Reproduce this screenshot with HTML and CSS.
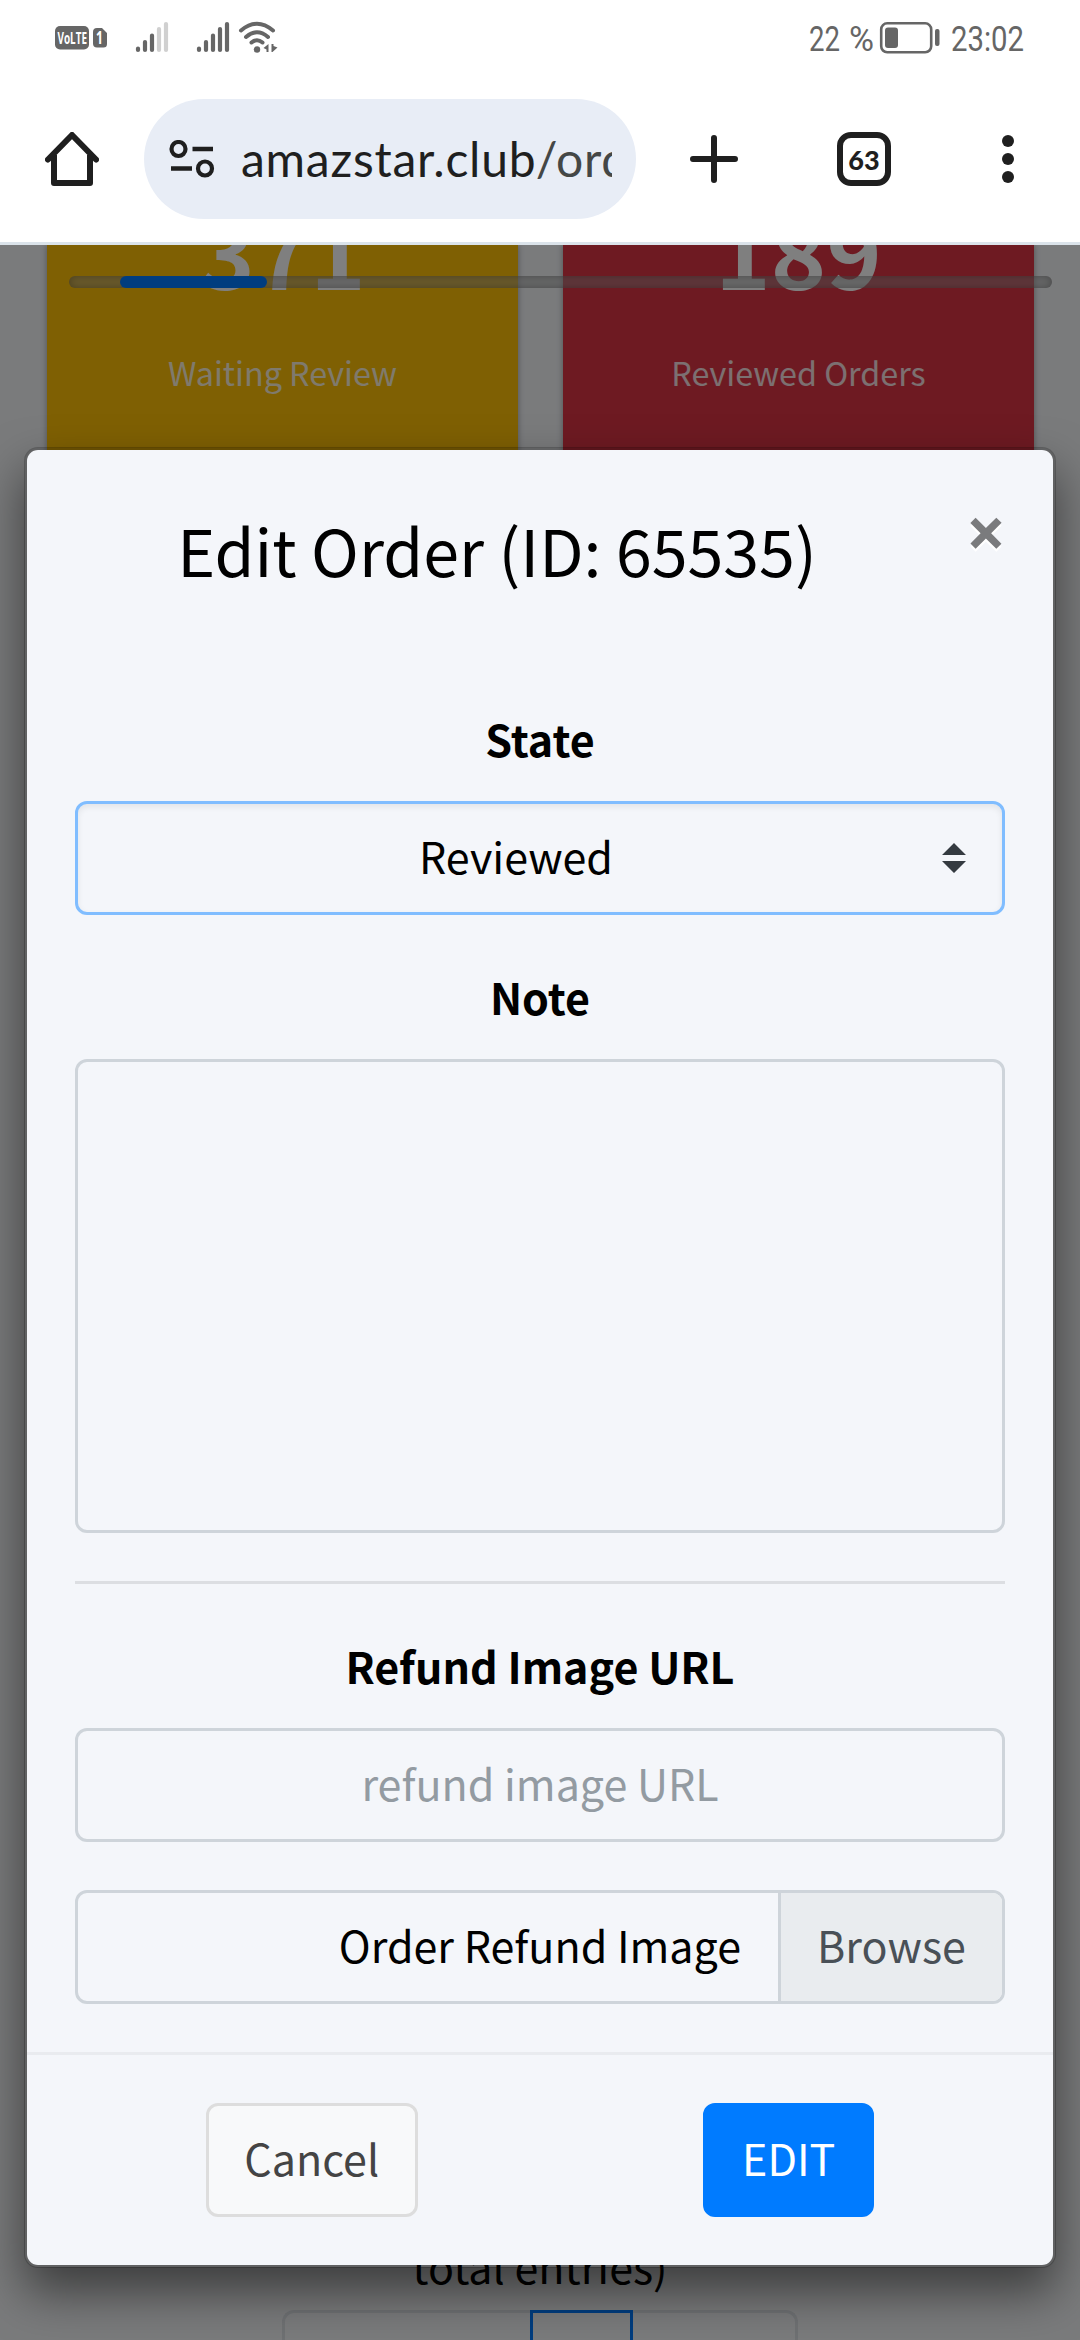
FILE: index.html
```html
<!DOCTYPE html>
<html lang="en">
<head>
<meta charset="utf-8">
<title>Orders</title>
<link rel="stylesheet" href="styles.css">
</head>
<body>
<header class="chrome">
  <div class="status">
    <svg width="290" height="76" viewBox="0 0 290 76">
      <g fill="#666">
        <rect x="55" y="26" width="34" height="23.5" rx="5"/>
        <path d="M97 28h5l5 5v11a3.500 3.500 0 0 1-3.500 3.500H97a4 4 0 0 1-4-4V32a4 4 0 0 1 4-4z"/>
      </g>
      <text x="57.500" y="43.500" class="badge" textLength="29.500" lengthAdjust="spacingAndGlyphs">VoLTE</text>
      <text x="96" y="44" class="badge badge-sim" textLength="7" lengthAdjust="spacingAndGlyphs">1</text>
      <g stroke="#666" stroke-width="4.200" stroke-linecap="round">
        <path d="M138 48.500v1.500M145 42v8M152 35.500v14.500"/>
        <path d="M159 29v21M166 24v26" stroke="#d0d0d0"/>
        <path d="M199 48.500v1.500M206 42v8M213 35.500v14.500M220 29v21M227 24v26"/>
      </g>
      <g fill="none" stroke="#666" stroke-width="4" stroke-linecap="round">
        <path d="M241 30.500q16-13.500 32 0M246 37q11-9.500 22 0M251.500 42.500q5.500-4.500 11 0"/>
      </g>
      <circle cx="257" cy="49.500" r="3.200" fill="#666"/>
      <path d="M268.500 44v8h-2v-2.500l-3-1.500zM271.500 44h2v2l4 1.500-5 4.500h-1z" fill="#666"/>
    </svg>
    <svg width="290" height="76" viewBox="790 0 290 76">
      <text x="809" y="51" class="clock" textLength="31" lengthAdjust="spacingAndGlyphs">22</text>
      <text x="849" y="51" class="clock" textLength="25" lengthAdjust="spacingAndGlyphs">%</text>
      <rect x="881.200" y="23.300" width="50" height="29" rx="6" fill="none" stroke="#666" stroke-width="2.600"/>
      <rect x="885" y="27.500" width="13" height="20.500" rx="3" fill="#666"/>
      <rect x="935" y="29" width="4.500" height="17" rx="2" fill="#666"/>
      <text x="951" y="51" class="clock" textLength="73" lengthAdjust="spacingAndGlyphs">23:02</text>
    </svg>
  </div>
  <div class="toolbar">
    <svg class="home" width="54" height="54" viewBox="0 0 54 54" fill="none" stroke="#1f1f1f" stroke-width="6" stroke-linecap="round" stroke-linejoin="round">
      <path d="M3 27.500L27 3l24 24.500"/><path d="M9 23v28h36V23" stroke-linecap="butt"/>
    </svg>
    <div class="address">
      <svg width="46" height="38" viewBox="0 0 46 38" fill="none" stroke="#1f1f1f">
        <circle cx="9.500" cy="9" r="7" stroke-width="4.200"/><circle cx="36" cy="28.500" r="7" stroke-width="4.200"/>
        <path d="M23.500 9H44M2 28.500h21" stroke-width="4.600"/>
      </svg>
      <div class="url">amazstar.club<span>/ord</span></div>
    </div>
    <svg class="plus" width="48" height="48" viewBox="0 0 48 48" stroke="#1f1f1f" stroke-width="6" stroke-linecap="round"><path d="M24 3v42M3 24h42"/></svg>
    <div class="tabs">63</div>
    <svg class="menu" width="12" height="48" viewBox="0 0 12 48" fill="#1f1f1f"><circle cx="6" cy="6" r="6"/><circle cx="6" cy="24" r="6"/><circle cx="6" cy="42" r="6"/></svg>
  </div>
</header>
<main class="page">
  <section class="cards">
    <div class="card card-warning"><strong>371</strong><span>Waiting Review</span></div>
    <div class="card card-danger"><strong>189</strong><span>Reviewed Orders</span></div>
  </section>
  <footer class="listing">
    <p>total entries)</p>
    <div class="pagination"><i class="first"></i><i class="current"></i><i class="last"></i></div>
  </footer>
  <div class="track"><div class="thumb"></div></div>
  <div class="backdrop"></div>
  <div class="modal">
    <div class="modal-header"><h1>Edit Order (ID: 65535)</h1><span class="close">×</span></div>
    <div class="modal-body">
      <div class="label">State</div>
      <div class="control select"><span>Reviewed</span>
        <svg width="24" height="30" viewBox="0 0 24 30" fill="#343a40"><path d="M12 0l12 12H0zM0 18h24L12 30z"/></svg>
      </div>
      <div class="label label-next">Note</div>
      <div class="control note"></div>
      <div class="rule"></div>
      <div class="label">Refund Image URL</div>
      <div class="control placeholder"><span>refund image URL</span></div>
      <div class="control file"><span>Order Refund Image</span><span class="browse">Browse</span></div>
    </div>
    <div class="modal-footer"><div class="btn cancel">Cancel</div><div class="btn edit">EDIT</div></div>
  </div>
</main>
</body>
</html>
```
FILE: styles.css
```css
* { box-sizing: border-box; }
body {
  margin: 0;
  width: 1080px;
  height: 2340px;
  overflow: hidden;
  display: flex;
  flex-direction: column;
  background: #fff;
  color: #000;
  font: 43px/72px "Noto Sans CJK JP", "Noto Sans", sans-serif;
}
svg { display: block; flex: none; }

/* Phone status bar and browser toolbar */
.chrome { flex: none; height: 245px; border-bottom: 3px solid #dbe3ea; }
.status { height: 76px; display: flex; justify-content: space-between; }
.badge { font: 700 16px "Open Sans", sans-serif; fill: #fff; }
.badge-sim { font-size: 17px; }
.clock { font: 400 35px Roboto, sans-serif; fill: #666; }
.toolbar { height: 166px; display: flex; align-items: center; padding-left: 45px; }
.address {
  flex: none;
  width: 492px;
  height: 120px;
  margin-left: 45px;
  padding: 0 24px 0 25px;
  border-radius: 60px;
  background: #e8edf6;
  display: flex;
  align-items: center;
  gap: 26px;
}
.url {
  flex: 1;
  overflow: hidden;
  white-space: nowrap;
  font: 48px/72px Lato, sans-serif;
  letter-spacing: .75px;
  color: #1f1f1f;
}
.url span { color: #444746; }
.plus { margin-left: 54px; }
.tabs {
  width: 54px;
  height: 54px;
  margin-left: 99px;
  border: 6px solid #1f1f1f;
  border-radius: 14px;
  font: 900 27px/43px Lato, sans-serif;
  text-align: center;
  color: #1f1f1f;
}
.menu { margin-left: 111px; }

/* Dimmed page */
.page { position: relative; flex: 1; overflow: hidden; background: #f4f6f9; display: flex; flex-direction: column; justify-content: space-between; }
.cards { display: flex; gap: 45px; padding: 0 46px 0 47px; }
.card {
  flex: 1;
  height: 250px;
  display: flex;
  flex-direction: column;
  align-items: center;
  box-shadow: 0 0 6px rgba(0, 0, 0, .35);
  color: #fff;
}
.card-warning { background: #ffc107; }
.card-danger { background: #dc3545; }
.card strong { font-size: 94px; line-height: 100px; margin-top: -46px; }
.card span { font-size: 32.3px; line-height: 54px; margin-top: 46px; opacity: .85; }
.listing { height: 90px; display: flex; flex-direction: column; align-items: center; }
.listing p { margin: -21px 0 9px; line-height: 72px; }
.pagination { width: 516px; height: 40px; display: flex; }
.pagination i { border: 0 solid #dee2e6; border-top-width: 3px; flex: none; }
.pagination .first { width: 248px; border-left-width: 3px; border-top-left-radius: 12px; }
.pagination .current { width: 103px; border: 3px solid #007bff; border-bottom: 0; }
.pagination .last { width: 165px; border-right-width: 3px; border-top-right-radius: 12px; }
.track {
  position: absolute;
  left: 69px;
  top: 31px;
  width: 983px;
  height: 12px;
  padding-left: 51px;
  border-radius: 6px;
  background: rgba(170, 170, 170, .5);
  box-shadow: inset 0 0 9px rgba(0, 0, 0, .3);
}
.thumb { width: 147px; height: 12px; border-radius: 6px; background: #007bff; }
.backdrop { position: absolute; inset: 0; background: rgba(0, 0, 0, .5); }

/* Edit dialog */
.modal {
  position: absolute;
  left: 24px;
  top: 202px;
  width: 1032px;
  background: #f4f6fa;
  background-clip: padding-box;
  border: 3px solid rgba(0, 0, 0, .2);
  border-radius: 14px;
  box-shadow: 0 24px 48px rgba(0, 0, 0, .5);
}
.modal-header { height: 252px; padding: 45px 0 0 48px; display: flex; align-items: flex-start; }
.modal-header h1 { margin: 0; flex: 1; text-align: center; font-size: 64.5px; font-weight: 400; line-height: 108px; }
.close { width: 134px; text-align: center; font: 700 70px/72px "Open Sans", sans-serif; color: #7a7b7d; text-shadow: 0 3px 0 #fff; }
.modal-body { padding: 0 48px 48px; display: flex; flex-direction: column; }
.label { height: 72px; margin-bottom: 27px; text-align: center; font-weight: 700; }
.label-next { margin-top: 45px; }
.control {
  height: 114px;
  border: 3px solid #ced4da;
  border-radius: 12px;
  padding-bottom: 6px;
  display: flex;
  align-items: center;
  justify-content: center;
}
.select { border-color: #80bdff; box-shadow: inset 0 3px 6px rgba(0, 0, 0, .075); padding: 0 36px; }
.select span { flex: 1; text-align: center; padding: 0 24px 6px 0; }
.note { height: 474px; }
.rule { height: 3px; margin: 48px 0 45px; background: #dcdee2; }
.placeholder { color: #939ba2; }
.file { margin-top: 48px; padding: 0; justify-content: flex-end; }
.file span { padding-bottom: 6px; }
.file .browse {
  width: 224px;
  height: 108px;
  margin-left: 37px;
  border-left: 3px solid #ced4da;
  border-radius: 0 9px 9px 0;
  background: #e9ecef;
  color: #495057;
  text-align: center;
  line-height: 103px;
}
.modal-footer { border-top: 3px solid #e9ebef; padding: 48px 36px; display: flex; justify-content: space-around; }
.btn { height: 114px; border: 3px solid #ddd; border-radius: 12px; line-height: 103px; text-align: center; }
.cancel { width: 212px; background: #f8f9fa; color: #444; }
.edit { width: 171px; background: #007bff; border-color: #007bff; color: #fff; }
```
